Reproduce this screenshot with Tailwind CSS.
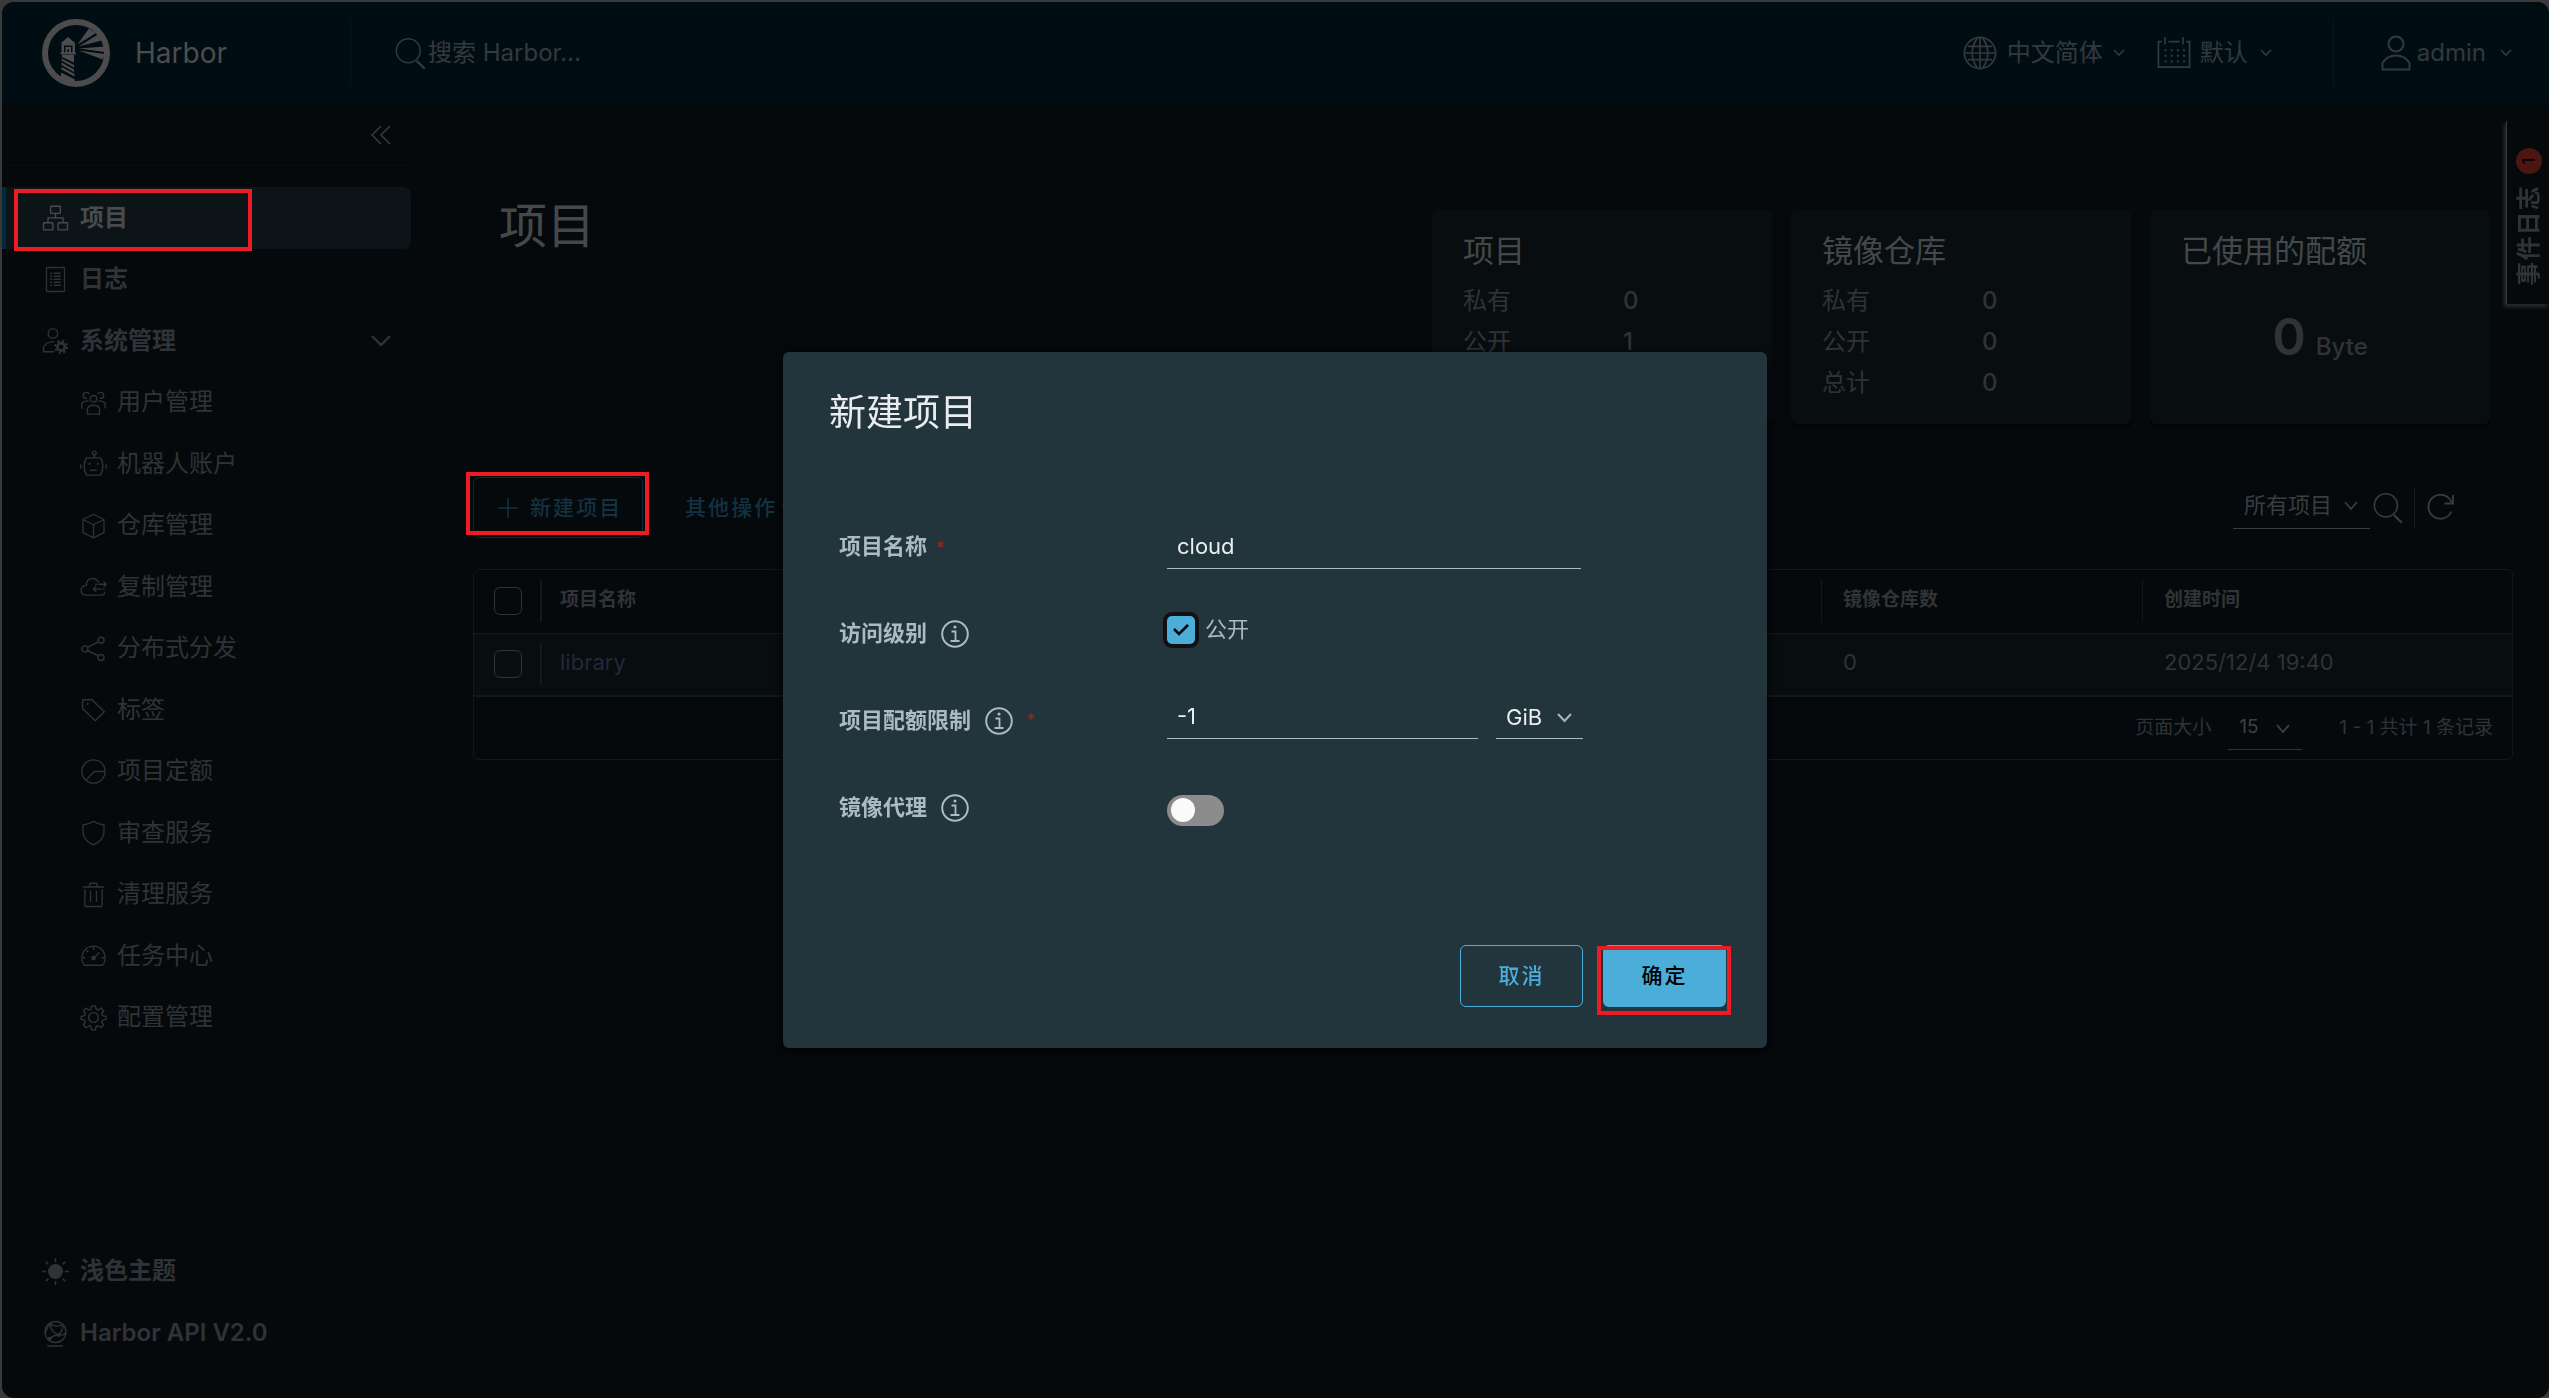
<!DOCTYPE html>
<html lang="zh-CN">
  <head>
    <meta charset="utf-8" />
    <meta name="viewport" content="width=device-width, initial-scale=1" />
    <title>Harbor</title>
    <script src="https://cdn.jsdelivr.net/npm/@tailwindcss/browser@4"></script>
  </head>
  <body class="bg-[#3a3a3a] font-['Inter','Noto_Sans_CJK_SC',sans-serif] text-[24px] text-[#2f3336]">
    <div class="min-h-screen pt-[2px] pl-[2px] flex flex-col">
      <div class="flex-1 flex flex-col rounded-xl overflow-hidden bg-[#05090c]">
        <!-- header -->
        <header class="h-[102px] flex items-center bg-[#000e14] pl-10 pr-[37px] text-[#34393c]">
          <a href="#" class="w-[309px] h-[68px] flex items-center gap-[25px] border-r border-[#07161d] text-[#4c4c4c]">
            <svg class="size-[68px]" viewBox="0 0 68 68" fill="currentColor">
              <circle cx="34" cy="34" r="31" fill="none" stroke="currentColor" stroke-width="6" />
              <path d="M26 18l7 6H19z" />
              <path fill-rule="evenodd" d="M19.500 24h13.500v10H19.500zM22 26.500v7h8.500v-7z" />
              <path fill-rule="evenodd" d="M23.500 28h5.500v6h-5.500zM25.500 30v4h1.500v-4z" />
              <path d="M18.500 33.500H34v2H18.500zM20 36h12v7.500l-12-5.500z" />
              <path d="M19.500 41.500l12.500 7v-2.500l-12.500-6.500zM19.500 46l12.500 7v-2.500l-12.500-7zM19.500 50.500l13 7V55l-13-7zM19 53.500l14 7V65l-14-3z" />
              <path d="M35.500 25.500L47 9.500l7 4.500zM36.500 27.500L56 15.500l3.500 6zM36.500 29.500L63 27.500v5.500zM36.500 31.500L62.500 35l-1.500 5.500z" />
            </svg>
            <span class="text-[28px]">Harbor</span>
          </a>
          <label class="flex-1 flex items-center pl-[44px]">
            <svg class="size-[33px]" viewBox="0 0 36 36" fill="none" stroke="currentColor" stroke-width="1.6">
              <circle cx="14.500" cy="15" r="13" />
              <path d="M23.500 26l9 8.500" stroke-width="2.400" />
            </svg>
            <input type="text" aria-label="搜索" placeholder="搜索 Harbor..." class="flex-1 bg-transparent outline-none placeholder:text-[#34393c]" />
          </label>
          <button class="flex items-center">
            <svg class="size-[34px] mr-[10px]" viewBox="0 0 36 36" fill="none" stroke="currentColor" stroke-width="1.8">
              <circle cx="18" cy="18" r="16.500" />
              <path d="M18 2v32M2.500 18h31M5 11h26M5 25h26" />
              <path d="M15 2.500c-7 9-7 22 0 31M21 2.500c7 9 7 22 0 31" />
            </svg>
            中文简体
            <svg class="w-[12px] ml-[10px]" viewBox="0 0 12 8" fill="none" stroke="currentColor" stroke-width="1.6"><path d="M1 1l5 5 5-5" /></svg>
          </button>
          <button class="ml-8 flex items-center">
            <svg class="size-[34px] mr-[9px]" viewBox="0 0 36 36" fill="none" stroke="currentColor" stroke-width="1.8">
              <path d="M5 6H1.500v27h33V6H31M12 6h12M8.500 1v8M27.500 1v8" />
              <path d="M8 15h22M8 21h22M8 27h22" stroke-width="2.200" stroke-dasharray="2.200 4.300" />
            </svg>
            默认
            <svg class="w-[12px] ml-[12px]" viewBox="0 0 12 8" fill="none" stroke="currentColor" stroke-width="1.6"><path d="M1 1l5 5 5-5" /></svg>
          </button>
          <div class="ml-[61px] h-[68px] pl-[47px] flex items-center border-l border-[#07161d]">
            <button class="flex items-center">
              <svg class="w-[30px] h-[36px] mr-[6px]" viewBox="0 0 30 36" fill="none" stroke="currentColor" stroke-width="2">
                <circle cx="15" cy="9" r="7.500" />
                <path d="M1.500 34.500V28c3-5 8-7.500 13.500-7.500S25.500 23 28.500 28v6.500z" stroke-linejoin="round" />
              </svg>
              admin
              <svg class="w-[12px] ml-[14px]" viewBox="0 0 12 8" fill="none" stroke="currentColor" stroke-width="1.6"><path d="M1 1l5 5 5-5" /></svg>
            </button>
          </div>
        </header>

        <div class="flex-1 flex">
          <!-- sidebar -->
          <aside class="w-[409px] flex flex-col pb-[34px]">
            <div class="h-[62px] border-b border-[#080d10] flex items-center justify-end pr-[19px]">
              <button aria-label="收起" class="text-[#34393c]">
                <svg class="size-[22px]" viewBox="0 0 22 22" fill="none" stroke="currentColor" stroke-width="1.6"><path d="M11 2l-9 9 9 9M20 2l-9 9 9 9" /></svg>
              </button>
            </div>
            <nav class="mt-[21px] h-[861px] grid auto-rows-fr">
              <a href="#" class="relative flex items-center gap-[11px] pl-9 border-l-4 border-[#00293b] rounded-r-lg bg-[#0d1418] font-bold text-[#484b4d]">
                <svg class="size-[27px]" viewBox="0 0 36 36" fill="none" stroke="currentColor" stroke-width="1.8">
                  <rect x="11.500" y="3" width="13" height="9.500" rx="1" />
                  <rect x="2" y="25" width="12.500" height="9.500" rx="1" />
                  <rect x="21.500" y="25" width="12.500" height="9.500" rx="1" />
                  <path d="M18 12.500v6M8 25v-6.500h20V25" />
                </svg>
                项目
                <span class="absolute left-2 top-0.5 w-[238px] h-[62px] border-4 border-[#ed1c24]"></span>
              </a>
              <a href="#" class="flex items-center gap-[11px] pl-10 font-bold">
                <svg class="size-[27px]" viewBox="0 0 36 36" fill="none" stroke="currentColor" stroke-width="1.8">
                  <rect x="6" y="2" width="24" height="32" rx="1" />
                  <path d="M11 9.500h2.500M11 13.500h2.500M11 17.500h2.500M11 21.500h2.500M11 25.500h2.500M15.500 9.500H25M15.500 13.500H25M15.500 17.500H25M15.500 21.500H25M15.500 25.500H25" stroke-width="2" />
                </svg>
                日志
              </a>
              <a href="#" class="flex items-center gap-[11px] pl-10 pr-5 font-bold">
                <svg class="size-[27px]" viewBox="0 0 36 36" fill="none" stroke="currentColor" stroke-width="1.8">
                  <circle cx="14.500" cy="8.500" r="6.300" />
                  <path d="M16 33H2v-6c3-5.500 8-8 14.500-7.500" />
                  <circle cx="25.500" cy="26.500" r="5" stroke-width="3.600" />
                  <circle cx="25.500" cy="26.500" r="8" stroke-width="2.800" stroke-dasharray="3 3.280" />
                </svg>
                <span class="flex-1">系统管理</span>
                <svg class="w-[20px]" viewBox="0 0 20 14" fill="none" stroke="currentColor" stroke-width="2.400"><path d="M1 2l9 9 9-9" /></svg>
              </a>
              <a href="#" class="flex items-center gap-[10px] pl-[78px]">
                <svg class="size-[27px]" viewBox="0 0 36 36" fill="none" stroke="currentColor" stroke-width="1.8">
                  <circle cx="18" cy="13" r="4.300" />
                  <path d="M10 33.500v-8c2-3 5-4 8-4s6 1 8 4v8z" stroke-linejoin="round" />
                  <path d="M12.500 7c-1-2-2.500-2.500-4-2.500-5.500 0-5.500 8 0 8h1M23.500 7c1-2 2.500-2.500 4-2.500 5.500 0 5.500 8 0 8h-1M2.500 26v-7c2.500-3 5.500-3.500 9-3M33.500 26v-7c-2.500-3-5.500-3.500-9-3" />
                </svg>
                用户管理
              </a>
              <a href="#" class="flex items-center gap-[10px] pl-[78px]">
                <svg class="size-[27px]" viewBox="0 0 36 36" fill="none" stroke="currentColor" stroke-width="1.8">
                  <circle cx="19" cy="4" r="2.500" />
                  <path d="M19 6.500V11M8.500 10.500h19c4 7 4 15 0 23h-19c-4-8-4-16 0-23zM1 19v6M35 19v6M13.500 27h9" />
                  <path d="M11.500 18.500h2.600M22.500 18.500h2.600" stroke-width="2.600" />
                </svg>
                机器人账户
              </a>
              <a href="#" class="flex items-center gap-[10px] pl-[78px]">
                <svg class="size-[27px]" viewBox="0 0 36 36" fill="none" stroke="currentColor" stroke-width="1.8" stroke-linejoin="round">
                  <path d="M18 3l14 7v17.500l-14 7-14-7V10zM4 10l14 7 14-7M18 17v17.500" />
                </svg>
                仓库管理
              </a>
              <a href="#" class="flex items-center gap-[10px] pl-[78px]">
                <svg class="size-[27px]" viewBox="0 0 36 36" fill="none" stroke="currentColor" stroke-width="1.8">
                  <path d="M25 13c-2-4-5.500-6-9-5.500-5 0-8 4-7.500 9-4 .5-7 3-7 6.500 0 4 3 6.500 7 6.500h20c3 0 4.500-2 4.500-4.500" />
                  <path d="M20 15h3M24.500 15H35M31.500 11.500L35 15l-3.500 3.500M33 21.500h-3M28.500 21.500H18M21.500 18L18 21.500l3.500 3.500" />
                </svg>
                复制管理
              </a>
              <a href="#" class="flex items-center gap-[10px] pl-[78px]">
                <svg class="size-[27px]" viewBox="0 0 36 36" fill="none" stroke="currentColor" stroke-width="1.9">
                  <circle cx="6.500" cy="18.500" r="4" />
                  <circle cx="28" cy="7" r="4" />
                  <circle cx="28" cy="30" r="4" />
                  <path d="M10 16.500L24.500 9M10 20.500L24.500 28" />
                </svg>
                分布式分发
              </a>
              <a href="#" class="flex items-center gap-[10px] pl-[78px]">
                <svg class="size-[27px]" viewBox="0 0 36 36" fill="none" stroke="currentColor" stroke-width="1.8" stroke-linejoin="round">
                  <path d="M3.500 5h12.500L32.500 21 20.500 33 3.500 17z" />
                  <path d="M9 10.500h2.500" stroke-width="2.500" />
                </svg>
                标签
              </a>
              <a href="#" class="flex items-center gap-[10px] pl-[78px]">
                <svg class="size-[27px]" viewBox="0 0 36 36" fill="none" stroke="currentColor" stroke-width="1.8">
                  <circle cx="18" cy="18" r="15.500" />
                  <path d="M33.500 18H19L8 29.500" />
                </svg>
                项目定额
              </a>
              <a href="#" class="flex items-center gap-[10px] pl-[78px]">
                <svg class="size-[27px]" viewBox="0 0 36 36" fill="none" stroke="currentColor" stroke-width="1.8" stroke-linejoin="round">
                  <path d="M18 3c4 3 9 4.500 14 5v9c0 8-6 14-14 17.500C10 31 4 25 4 17V8c5-.5 10-2 14-5z" />
                </svg>
                审查服务
              </a>
              <a href="#" class="flex items-center gap-[10px] pl-[78px]">
                <svg class="size-[27px]" viewBox="0 0 36 36" fill="none" stroke="currentColor" stroke-width="1.8">
                  <path d="M4 8h28M13 8V4.500c0-1 .5-1.500 1.500-1.500h7c1 0 1.500.5 1.500 1.500V8M6.500 11v20.500c0 1.500 1 2.500 2.500 2.500h18c1.500 0 2.500-1 2.500-2.500V11M14 13v15M22 13v15" />
                </svg>
                清理服务
              </a>
              <a href="#" class="flex items-center gap-[10px] pl-[78px]">
                <svg class="size-[27px]" viewBox="0 0 36 36" fill="none" stroke="currentColor" stroke-width="1.8">
                  <path d="M5.500 31c-2-3-3-6-3-9.500C2.500 12.500 9.500 5.500 18 5.500s15.500 7 15.500 16c0 3.500-1 6.500-3 9.500z" stroke-linejoin="round" />
                  <path d="M18 6v4.500M3 21h4M29 21h4M8.500 11l2.500 2.500M18 21.500l8-7.500" />
                  <circle cx="18" cy="21.500" r="2.200" fill="currentColor" />
                </svg>
                任务中心
              </a>
              <a href="#" class="flex items-center gap-[10px] pl-[78px]">
                <svg class="size-[27px]" viewBox="0 0 36 36" fill="none" stroke="currentColor" stroke-width="1.9" stroke-linejoin="round">
                  <circle cx="18" cy="18" r="6.500" />
                  <path d="M15.500 2.500h5l1 4.500 2.500 1 4-2.500 3.500 3.500-2.500 4 1 2.500 4.500 1v4l-4.500 1-1 2.500 2.500 4-3.500 3.500-4-2.500-2.500 1-1 4.500h-5l-1-4.500-2.500-1-4 2.500L4.500 28 7 24l-1-2.500-4.500-1v-4l4.500-1L7 13 4.500 9 8 5.500 12 8l2.500-1z" />
                </svg>
                配置管理
              </a>
            </nav>
            <div class="mt-auto font-bold">
              <button class="h-[62px] flex items-center gap-[11px] pl-10">
                <svg class="size-[27px]" viewBox="0 0 36 36" fill="none" stroke="currentColor" stroke-width="2">
                  <circle cx="18" cy="18" r="10" fill="currentColor" stroke="none" />
                  <path d="M18 0v5.500M18 30.500V36M0 18h5.500M30.500 18H36M5 5l3.500 3.500M27.500 27.500L31 31M31 5l-3.500 3.500M8.500 27.500L5 31" />
                </svg>
                浅色主题
              </button>
              <a href="#" class="h-[62px] flex items-center gap-[11px] pl-10 font-semibold">
                <svg class="size-[27px]" viewBox="0 0 36 36" fill="none" stroke="currentColor" stroke-width="1.8">
                  <circle cx="18" cy="16" r="14" />
                  <path d="M7 34.500h21" stroke-width="2" />
                  <path d="M11 5c4 4 13 4 17 1M11 5c0 6 4 12 11 15M11 5c-3 4-6 8-6.500 13M28 7c0 5-2 9-6 13M32 17c-3 4-6 3-10 3s-8 1-11 5" />
                  <circle cx="22.500" cy="20" r="1.700" fill="currentColor" />
                  <circle cx="11" cy="6" r="1.500" fill="currentColor" />
                  <circle cx="10" cy="25" r="1.700" fill="currentColor" />
                </svg>
                Harbor API V2.0
              </a>
            </div>
          </aside>

          <!-- project list -->
          <main class="flex-1 pt-[90px] pl-[62px] pr-9">
            <div class="flex justify-between">
              <h1 class="pl-[26px] text-[48px] leading-[64px] text-[#45484a]">项目</h1>
              <div class="mt-4 mr-[23px] flex gap-[19px]">
                <section class="w-[340px] h-[214px] rounded-md bg-[#080e10] shadow-[0_5px_0_#020506] px-[31px] pt-[21px]">
                  <h2 class="text-[31px] leading-[40px] text-[#45484a]">项目</h2>
                  <dl class="mt-[9px] grid grid-cols-[160px_1fr] leading-[41px]">
                    <dt>私有</dt><dd class="font-medium">0</dd>
                    <dt>公开</dt><dd class="font-medium">1</dd>
                    <dt>总计</dt><dd class="font-medium">1</dd>
                  </dl>
                </section>
                <section class="w-[340px] h-[214px] rounded-md bg-[#080e10] shadow-[0_5px_0_#020506] px-[31px] pt-[21px]">
                  <h2 class="text-[31px] leading-[40px] text-[#45484a]">镜像仓库</h2>
                  <dl class="mt-[9px] grid grid-cols-[160px_1fr] leading-[41px]">
                    <dt>私有</dt><dd class="font-medium">0</dd>
                    <dt>公开</dt><dd class="font-medium">0</dd>
                    <dt>总计</dt><dd class="font-medium">0</dd>
                  </dl>
                </section>
                <section class="w-[340px] h-[214px] rounded-md bg-[#080e10] shadow-[0_5px_0_#020506] px-[31px] pt-[21px]">
                  <h2 class="text-[31px] leading-[40px] text-[#45484a]">已使用的配额</h2>
                  <p class="mt-9 flex items-baseline justify-center gap-[10px] leading-[60px] font-medium">
                    <span class="text-[51px] font-semibold">0</span>Byte
                  </p>
                </section>
              </div>
            </div>

            <div class="mt-[53px] h-[61px] flex items-center">
              <button class="relative h-full w-[170px] flex items-center pl-[23px] border border-[#0b2935] rounded-md text-[21px] tracking-widest font-medium text-[#123240]">
                <svg class="size-[22px] mr-[11px]" viewBox="0 0 22 22" fill="none" stroke="currentColor" stroke-width="1.6"><path d="M11 1v20M1 11h20" /></svg>
                新建项目
                <span class="absolute -left-2 -top-[6px] w-[183px] h-[63px] border-4 border-[#ed1c24]"></span>
              </button>
              <button class="ml-[42px] flex items-center gap-1 text-[21px] tracking-widest font-medium text-[#123240]">
                其他操作
                <svg class="w-[12px]" viewBox="0 0 12 8" fill="none" stroke="currentColor" stroke-width="1.6"><path d="M1 1l5 5 5-5" /></svg>
              </button>
              <div class="ml-auto mr-[58px] flex items-center text-[#3a3d3f]">
                <div class="relative -mt-1 text-[22px]">
                  <select aria-label="项目范围" class="appearance-none w-[137px] h-[46px] pl-[11px] bg-transparent border-b border-current outline-none">
                    <option>所有项目</option>
                  </select>
                  <svg class="absolute right-3 top-[18px] w-[14px] pointer-events-none" viewBox="0 0 14 10" fill="none" stroke="currentColor" stroke-width="1.8"><path d="M1 1l6 7 6-7" /></svg>
                </div>
                <button aria-label="搜索" class="pl-[3px] pr-[9px]">
                  <svg class="size-[32px]" viewBox="0 0 36 36" fill="none" stroke="currentColor" stroke-width="1.8">
                    <circle cx="14.500" cy="15" r="13" />
                    <path d="M23.500 26l9 8.500" stroke-width="2.400" />
                  </svg>
                </button>
                <button aria-label="刷新" class="h-[41px] pl-3 border-l border-[#181c1e]">
                  <svg class="size-[28px]" viewBox="0 0 28 28" fill="none" stroke="currentColor" stroke-width="1.8"><path d="M24.500 17.500A12 12 0 1 1 24.500 8M26 1v8.500h-8.500" /></svg>
                </button>
              </div>
            </div>

            <div class="mt-[31px] border border-[#13181a] rounded-md">
              <table class="w-full table-fixed text-left">
                <thead class="text-[19px] text-[#303437]">
                  <tr class="h-[63px] border-b border-[#13181a]">
                    <th class="w-[66px] pl-[20px]"><input type="checkbox" aria-label="全选" class="block appearance-none size-[28px] rounded-md border border-[#303437]" /></th>
                    <th><div class="h-[42px] border-l-2 border-[#13181a] pl-[18px] leading-[40px] font-bold">项目名称</div></th>
                    <th class="w-[321px]"><div class="h-[42px] border-l border-[#13181a] pl-[21px] leading-[40px] font-bold">镜像仓库数</div></th>
                    <th class="w-[370px]"><div class="h-[42px] border-l border-[#13181a] pl-[21px] leading-[40px] font-bold">创建时间</div></th>
                  </tr>
                </thead>
                <tbody class="text-[22px]">
                  <tr class="h-[63px] bg-[#080d0f] border-b-2 border-[#13181a]">
                    <td class="pl-[20px]"><input type="checkbox" aria-label="library" class="block appearance-none size-[28px] rounded-md border border-[#303437]" /></td>
                    <td><div class="h-[44px] border-l-2 border-[#13181a] pl-[18px] leading-[40px]"><a href="#" class="text-[#23283a]">library</a></div></td>
                    <td class="pl-[22px]"><div class="h-[44px] leading-[40px]">0</div></td>
                    <td class="pl-[22px]"><div class="h-[44px] leading-[40px]">2025/12/4 19:40</div></td>
                  </tr>
                </tbody>
              </table>
              <div class="h-[62px] flex items-center justify-end pr-[19px] text-[19px]">
                <label for="page-size">页面大小</label>
                <div class="relative ml-[17px] mr-[37px] text-[#3e4143]">
                  <select id="page-size" class="appearance-none w-[74px] h-[44px] pl-[11px] bg-transparent border-b border-[#303437] outline-none">
                    <option>15</option>
                  </select>
                  <svg class="absolute right-3 top-[18px] w-[14px] pointer-events-none" viewBox="0 0 14 10" fill="none" stroke="currentColor" stroke-width="1.8"><path d="M1 1l6 7 6-7" /></svg>
                </div>
                <span>1 - 1 共计 1 条记录</span>
              </div>
            </div>
          </main>
        </div>
      </div>
    </div>

    <!-- event log tab -->
    <button class="fixed right-0 top-[121px] w-[43px] h-[183px] pt-[27px] pl-0.5 flex flex-col items-center gap-[11px] bg-[#05090c] border-l border-[#3a3a3a] shadow-[-2px_3px_4px_#2c2c2c]">
      <span class="size-[26px] rounded-full bg-[#4b1612] text-black text-[17px] leading-[26px] -rotate-90">1</span>
      <span class="[writing-mode:vertical-rl] [text-orientation:sideways] rotate-180 leading-[28px] tracking-wider font-bold">事件日志</span>
    </button>

    <!-- new project dialog -->
    <div class="fixed inset-0 pt-[2px] pl-px flex items-center justify-center">
      <form role="dialog" aria-labelledby="dialog-title" class="w-[984px] rounded-md bg-[#22343c] shadow-[0_2px_10px_#000] pt-[33px] pb-[41px] text-[22px] text-[#acbac3]">
        <h3 id="dialog-title" class="pl-[46px] text-[37px] leading-[56px] text-[#eaedf0]">新建项目</h3>
        <div class="mt-[62px] pl-[56px] grid grid-cols-[328px_1fr] auto-rows-[87px] items-center">
          <label for="name" class="font-bold">项目名称 <span class="text-[#c21d00] text-[17px] font-normal ml-1">*</span></label>
          <input id="name" type="text" value="cloud" class="w-[414px] h-[44px] pl-[10px] bg-transparent border-b border-[#acbac3] outline-none text-[#eaedf0]" />

          <span class="flex items-center gap-[14px] font-bold">
            访问级别
            <svg class="size-[28px]" viewBox="0 0 28 28" fill="none" stroke="currentColor" stroke-width="2"><circle cx="14" cy="14" r="12.800" /><path d="M10.500 11.500H14.500V20.500M9.500 21h9" stroke-width="1.800" /><circle cx="14" cy="7" r="1.600" fill="currentColor" stroke="none" /></svg>
          </span>
          <label class="pb-2 flex items-center gap-[10px]">
            <span class="relative">
              <input type="checkbox" checked class="block appearance-none size-[28px] rounded-[5px] bg-[#4aaed9] ring-4 ring-[#111]" />
              <svg class="absolute left-[6px] top-[7px] w-[16px] pointer-events-none" viewBox="0 0 16 13" fill="none" stroke="#000" stroke-width="2.600"><path d="M1 6l5 5 9-9" /></svg>
            </span>
            公开
          </label>

          <span class="flex items-center gap-[14px] font-bold">
            <label for="quota">项目配额限制</label>
            <svg class="size-[28px]" viewBox="0 0 28 28" fill="none" stroke="currentColor" stroke-width="2"><circle cx="14" cy="14" r="12.800" /><path d="M10.500 11.500H14.500V20.500M9.500 21h9" stroke-width="1.800" /><circle cx="14" cy="7" r="1.600" fill="currentColor" stroke="none" /></svg>
            <span class="text-[#c21d00] text-[17px] font-normal">*</span>
          </span>
          <div class="pb-[2px] flex gap-[18px] text-[#eaedf0]">
            <input id="quota" type="text" value="-1" class="w-[311px] h-[38px] pl-[10px] pb-[6px] bg-transparent border-b border-[#acbac3] outline-none" />
            <div class="relative">
              <select aria-label="单位" class="appearance-none w-[87px] h-[38px] pl-[10px] pb-[6px] bg-transparent border-b border-[#acbac3] outline-none">
                <option>GiB</option>
              </select>
              <svg class="absolute right-[11px] top-[12px] w-[15px] pointer-events-none" viewBox="0 0 15 10" fill="none" stroke="#b3b3b3" stroke-width="2"><path d="M1 1l6.500 7L14 1" /></svg>
            </div>
          </div>

          <span class="flex items-center gap-[14px] font-bold">
            <label for="proxy">镜像代理</label>
            <svg class="size-[28px]" viewBox="0 0 28 28" fill="none" stroke="currentColor" stroke-width="2"><circle cx="14" cy="14" r="12.800" /><path d="M10.500 11.500H14.500V20.500M9.500 21h9" stroke-width="1.800" /><circle cx="14" cy="7" r="1.600" fill="currentColor" stroke="none" /></svg>
          </span>
          <input id="proxy" type="checkbox" class="mt-1.5 appearance-none w-[57px] h-[31px] rounded-full bg-[#8c8c8c] p-[3px] pl-1 before:block before:size-[24px] before:rounded-full before:bg-[#fafafa]" />
        </div>
        <div class="mt-[94px] pr-[41px] flex justify-end gap-5 text-[21px] font-medium tracking-widest">
          <button type="button" class="w-[123px] h-[62px] rounded-md border border-[#4aaed9] text-[#4aaed9]">取消</button>
          <button type="button" class="relative w-[123px] h-[62px] rounded-md bg-[#4aaed9] text-black">
            确定
            <span class="absolute -left-[6px] top-px w-[134px] h-[69px] border-4 border-[#ed1c24]"></span>
          </button>
        </div>
      </form>
    </div>
  </body>
</html>
